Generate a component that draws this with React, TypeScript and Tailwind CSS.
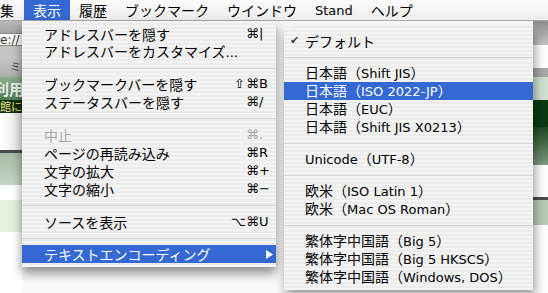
import React from "react";

type Row =
  | { sep: true; h: string }
  | { sep?: false; label: string; mod?: string; key?: string; disabled?: boolean; active?: boolean; arrow?: boolean; checked?: boolean };

const viewMenu: Row[] = [
  { label: "アドレスバーを隠す", key: "|" },
  { label: "アドレスバーをカスタマイズ..." },
  { sep: true, h: "h-[14px]" },
  { label: "ブックマークバーを隠す", mod: "⇧", key: "B" },
  { label: "ステータスバーを隠す", key: "/" },
  { sep: true, h: "h-[15px]" },
  { label: "中止", key: ".", disabled: true },
  { label: "ページの再読み込み", key: "R" },
  { label: "文字の拡大", key: "+" },
  { label: "文字の縮小", key: "−" },
  { sep: true, h: "h-[15px]" },
  { label: "ソースを表示", mod: "⌥", key: "U" },
  { sep: true, h: "h-[14px]" },
  { label: "テキストエンコーディング", arrow: true, active: true },
];

const encodingMenu: Row[] = [
  { label: "デフォルト", checked: true },
  { sep: true, h: "h-[14px]" },
  { label: "日本語（Shift JIS）" },
  { label: "日本語（ISO 2022-JP）", active: true },
  { label: "日本語（EUC）" },
  { label: "日本語（Shift JIS X0213）" },
  { sep: true, h: "h-[14px]" },
  { label: "Unicode（UTF-8）" },
  { sep: true, h: "h-[14px]" },
  { label: "欧米（ISO Latin 1）" },
  { label: "欧米（Mac OS Roman）" },
  { sep: true, h: "h-[14px]" },
  { label: "繁体字中国語（Big 5）" },
  { label: "繁体字中国語（Big 5 HKSCS）" },
  { label: "繁体字中国語（Windows, DOS）" },
];

// latin runs are drawn in a Lucida-like face, the rest in the CJK font
const Label = ({ text }: { text: string }) => (
  <>
    {text.split(/([\x20-\x7e]+)/).filter(Boolean).map((part, i) =>
      /^[\x20-\x7e]+$/.test(part)
        ? <span key={i} className="font-['DejaVu_Sans',sans-serif] text-[13px]">{part}</span>
        : <span key={i}>{part}</span>
    )}
  </>
);

const menuBg = "bg-[repeating-linear-gradient(to_bottom,#f4f4f4_0px,#f4f4f4_2px,#ececec_2px,#ececec_4px)]";

const Separator = ({ h }: { h: string }) => (
  <div className={`${h} flex items-center`}>
    <div className="h-px w-full bg-[#d4d4d4]"></div>
  </div>
);

const ViewMenu = () => (
  <div className={`absolute left-[22px] top-[21px] w-[254px] py-[4px] ${menuBg} shadow-[0_6px_10px_rgba(0,0,0,0.45)]`}>
    {viewMenu.map((row, i) =>
      row.sep ? <Separator key={i} h={row.h} /> :
        <div key={i} className={`flex h-[18px] items-center pl-[22px] leading-[18px] ${row.active ? "bg-[#3468d2] text-white" : row.disabled ? "text-[#a6a6a6]" : "text-black"}`}>
          <div className="flex-1 whitespace-nowrap"><Label text={row.label} /></div>
          {row.key &&
            <div className="flex pr-[5px] font-['DejaVu_Sans',sans-serif] text-[13px]">
              <span className="w-[15px] pr-[1px] text-right">{row.mod}</span>
              <span className="w-[13px] text-center">⌘</span>
              <span className="w-[12px]">{row.key}</span>
            </div>
          }
          {row.arrow &&
            <svg width="7" height="9" viewBox="0 0 7 9" className="mr-[3px]">
              <polygon points="0,0 7,4.5 0,9" fill="white" />
            </svg>
          }
        </div>
    )}
  </div>
);

const EncodingMenu = () => (
  <div className={`absolute left-[284px] top-[28px] w-[249px] py-[4px] ${menuBg} shadow-[2px_5px_10px_rgba(0,0,0,0.4)]`}>
    {encodingMenu.map((row, i) =>
      row.sep ? <Separator key={i} h={row.h} /> :
        <div key={i} className={`flex h-[18px] items-center pl-[6px] leading-[18px] whitespace-nowrap ${row.active ? "bg-[#3468d2] text-white" : "text-black"}`}>
          <span className="w-[15px] font-['DejaVu_Sans',sans-serif] text-[11px] text-[#444]">{row.checked ? "✔" : ""}</span>
          <span><Label text={row.label} /></span>
        </div>
    )}
  </div>
);

const MenuBar = () => {
  const items = ["履歴", "ブックマーク", "ウインドウ", "Stand", "ヘルプ"];
  return (
    <div className="flex h-[21px] items-stretch border-b border-[#a8a8a8] bg-gradient-to-b from-[#fcfcfc] to-[#ececec] text-black">
      <div className="flex items-center pr-[10px]">集</div>
      <div className="flex items-center bg-[#3468d2] px-[9px] text-white">表示</div>
      {items.map(item =>
        <div key={item} className="flex items-center px-[9px]"><Label text={item} /></div>
      )}
    </div>
  );
};

export default function App() {
  return (
    <div className="relative h-[293px] w-[548px] overflow-hidden bg-white font-['Noto_Sans_CJK_JP',sans-serif] text-[14px] leading-none">
      <MenuBar />
      <div className="flex h-[272px]">
        {/* page edge to the left of the menus */}
        <div className="flex w-[22px] flex-col overflow-hidden">
          <div className="h-[12px] bg-gradient-to-b from-[#b8b8b8] to-[#a4a4a4]"></div>
          <div className="flex h-[13px] items-center border-y border-[#8a8a8a] bg-white font-['DejaVu_Sans',sans-serif] text-[12px] text-[#333] whitespace-nowrap">e://</div>
          <div className="h-[10px] bg-[#c4c4c4]"></div>
          <div className="flex h-[21px] items-center justify-end bg-gradient-to-b from-[#c8c8c8] to-[#acacac] pr-[1px] text-[11px] text-[#444]">ミ</div>
          <div className="flex h-[23px] items-center overflow-hidden bg-gradient-to-b from-[#8fae8f] to-[#4f7a52] text-[15px] font-bold text-[#e8f0e8] whitespace-nowrap">
            <span className="ml-[-6px]">利用</span>
          </div>
          <div className="flex h-[13px] items-center bg-[#0e2e10] text-[11px] text-[#e6e07a] whitespace-nowrap">館に</div>
          <div className="h-[37px] bg-gradient-to-r from-white to-[#e4e4e4]"></div>
          <div className="h-[3px] bg-[#4a4a4a]"></div>
          <div className="h-[32px] bg-gradient-to-b from-[#a6bca6] to-[#c6d4c6]"></div>
          <div className="h-[15px] bg-white"></div>
          <div className="h-[32px] bg-[#e2f2de]"></div>
          <div className="flex-1 bg-white"></div>
        </div>
        <div className="flex-1 bg-[#f8f8f8]"></div>
        {/* page edge to the right of the submenu */}
        <div className="flex w-[15px] flex-col">
          <div className="h-[24px] bg-gradient-to-b from-[#8c8c8c] to-[#c4c4c4]"></div>
          <div className="h-[23px] bg-white"></div>
          <div className="h-[9px] bg-[#a8a8a8]"></div>
          <div className="h-[23px] bg-[#cfe2cf]"></div>
          <div className="h-[27px] bg-[#0b3a12]"></div>
          <div className="h-[38px] bg-gradient-to-b from-[#1d4a22] to-[#7c9a7e]"></div>
          <div className="h-[32px] bg-white"></div>
          <div className="h-[3px] bg-[#4a4a4a]"></div>
          <div className="h-[25px] bg-[#b8ccb8]"></div>
          <div className="flex-1 bg-white"></div>
        </div>
      </div>
      <ViewMenu />
      <EncodingMenu />
    </div>
  );
}
